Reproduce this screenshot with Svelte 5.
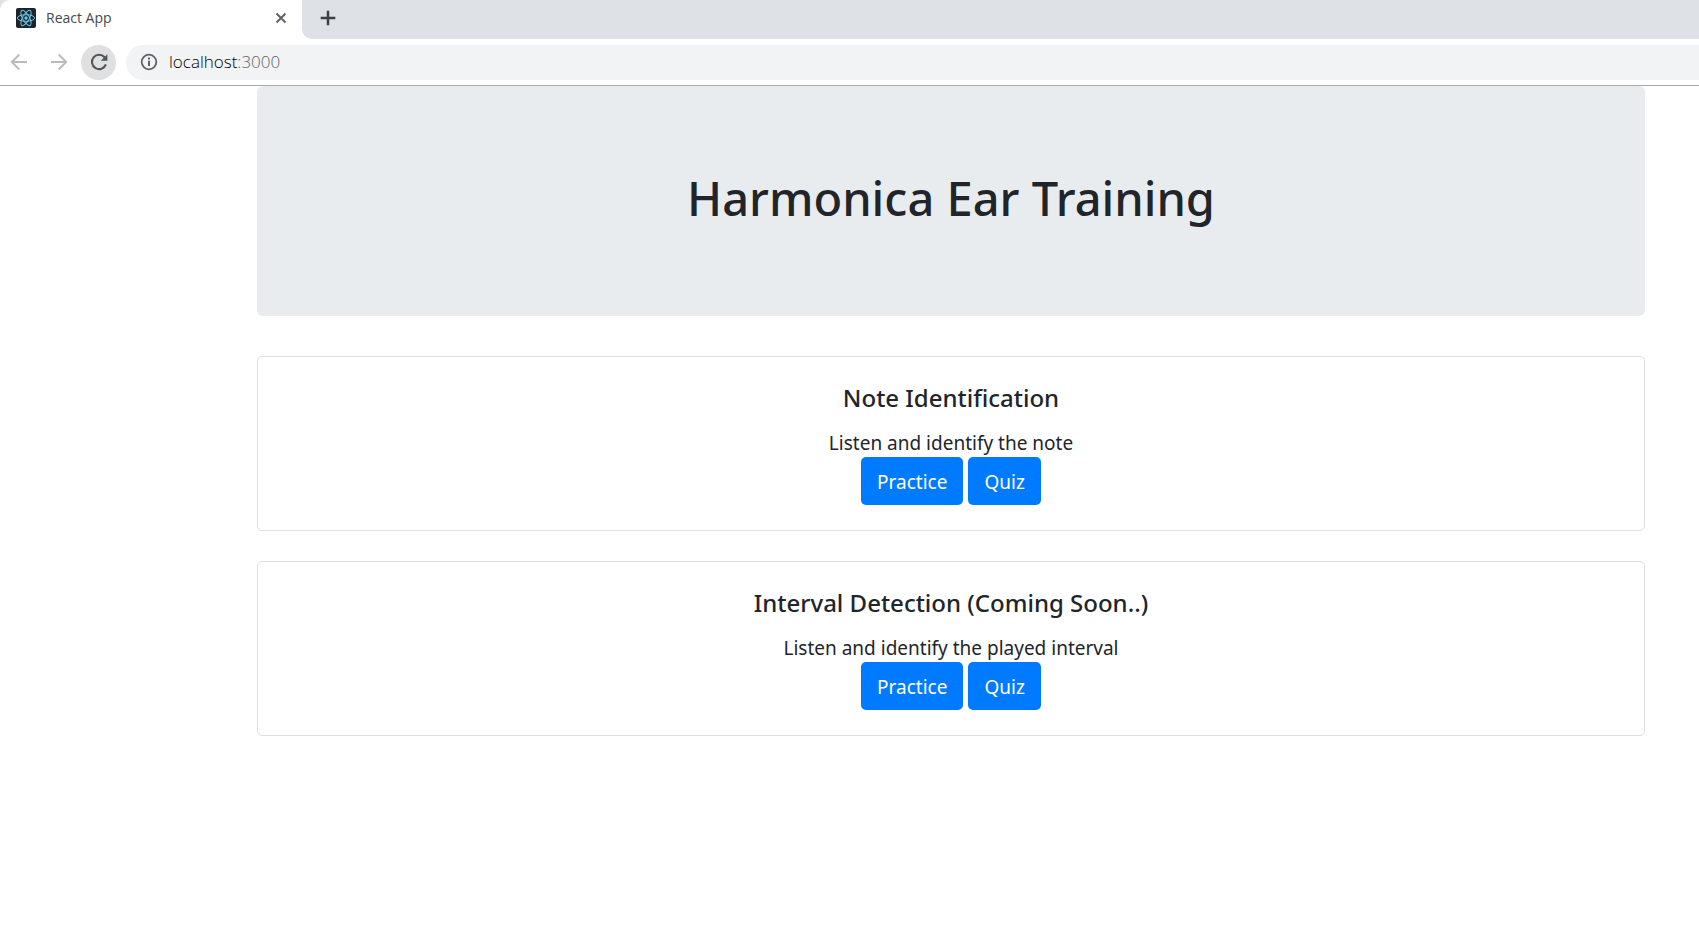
<script>
  const activities = [
    { id: 'note', title: 'Note Identification', text: 'Listen and identify the note' },
    { id: 'interval', title: 'Interval Detection (Coming Soon..)', text: 'Listen and identify the played interval' }
  ];
</script>

<div class="browser">
  <div class="tabs">
    <div class="tab">
      <svg class="favicon" viewBox="0 0 20 20" aria-hidden="true">
        <rect width="20" height="20" rx="2" fill="#20232a" />
        <g fill="none" stroke="#61c8e6" stroke-width="1">
          <ellipse cx="10" cy="10" rx="8.6" ry="3.3" />
          <ellipse cx="10" cy="10" rx="8.6" ry="3.3" transform="rotate(60 10 10)" />
          <ellipse cx="10" cy="10" rx="8.6" ry="3.3" transform="rotate(120 10 10)" />
        </g>
        <circle cx="10" cy="10" r="1.7" fill="#61c8e6" />
      </svg>
      <span class="tab-title">React App</span>
      <button class="close" aria-label="Close tab">
        <svg width="12" height="12" viewBox="0 0 12 12"><path d="M1.5 1.5l9 9M10.5 1.5l-9 9" stroke="#5f6368" stroke-width="2" /></svg>
      </button>
    </div>
    <div class="strip">
      <button class="new-tab" aria-label="New tab">
        <svg width="16" height="16" viewBox="0 0 16 16"><path d="M8 .7v14.6M.7 8h14.6" stroke="#3c4043" stroke-width="2.5" /></svg>
      </button>
    </div>
  </div>

  <div class="toolbar">
    <button class="nav" aria-label="Back">
      <svg width="18" height="18" viewBox="0 0 18 18"><path d="M17 9H2M9.3 1.5L1.8 9l7.5 7.5" fill="none" stroke="#b9bbbd" stroke-width="1.9" /></svg>
    </button>
    <button class="nav" aria-label="Forward">
      <svg width="18" height="18" viewBox="0 0 18 18"><path d="M1 9h15M8.7 1.5L16.2 9l-7.5 7.5" fill="none" stroke="#b9bbbd" stroke-width="1.9" /></svg>
    </button>
    <button class="nav reload" aria-label="Reload">
      <svg width="20" height="20" viewBox="0 0 20 20">
        <path d="M16.9 12.4A7.2 7.2 0 1 1 15.6 5.2" fill="none" stroke="#505458" stroke-width="2.1" />
        <path d="M18.4 2.2v6.6h-6.6z" fill="#505458" />
      </svg>
    </button>
    <div class="address">
      <svg width="18" height="18" viewBox="0 0 18 18" aria-hidden="true">
        <circle cx="9" cy="9" r="7.3" fill="none" stroke="#5f6368" stroke-width="1.8" />
        <path d="M9 7.8v5.3M9 4.6v1.9" stroke="#5f6368" stroke-width="2" />
      </svg>
      <span class="url">localhost<span class="port">:3000</span></span>
    </div>
  </div>
</div>

<main>
  <header class="jumbotron">
    <h1>Harmonica Ear Training</h1>
  </header>
  {#each activities as activity (activity.id)}
    <section class="card" aria-labelledby={activity.id}>
      <h2 id={activity.id}>{activity.title}</h2>
      <p>{activity.text}</p>
      <div class="actions">
        <button class="btn">Practice</button>
        <button class="btn">Quiz</button>
      </div>
    </section>
  {/each}
</main>

<style>
  :global(body) {
    margin: 0;
    background: #fff;
    color: #212529;
    font-family: "Noto Sans", "Open Sans", sans-serif;
  }
  button {
    border: 0;
    padding: 0;
    background: none;
    font: inherit;
    cursor: pointer;
  }
  svg {
    display: block;
    flex: none;
  }
  .browser {
    border-bottom: 1px solid #a8a9ab;
    font-family: "Open Sans", sans-serif;
  }
  .tabs {
    display: flex;
    height: 39px;
    background: linear-gradient(90deg, #dee1e6 10px, #fff 10px);
  }
  .tab {
    box-sizing: border-box;
    display: flex;
    align-items: center;
    width: 302px;
    padding: 0 15px 4px 16px;
    background: #fff;
    border-radius: 10px 10px 0 0;
  }
  .favicon {
    width: 20px;
    height: 20px;
  }
  .tab-title {
    flex: 1;
    margin-left: 10px;
    font-size: 14px;
    color: #45494d;
  }
  .strip {
    flex: 1;
    display: flex;
    align-items: center;
    padding: 0 0 4px 18px;
    background: #dee1e6;
    border-bottom-left-radius: 10px;
  }
  .toolbar {
    display: flex;
    align-items: center;
    height: 46px;
    padding-left: 1px;
  }
  .nav {
    display: grid;
    place-items: center;
    width: 35px;
    height: 35px;
    margin-right: 5px;
    border-radius: 50%;
  }
  .reload {
    margin-right: 10px;
    background: #e0e0e1;
  }
  .address {
    flex: 1;
    display: flex;
    align-items: center;
    gap: 11px;
    height: 35px;
    padding-left: 14px;
    background: #f1f3f4;
    border-radius: 18px 0 0 18px;
  }
  .url {
    font-size: 17px;
    font-weight: 300;
    line-height: 24px;
    color: #000;
  }
  .port {
    color: #5f6368;
  }
  main {
    margin: 0 54px 0 257px;
    text-align: center;
  }
  .jumbotron {
    margin-bottom: 40px;
    padding: 82px 40px 88px;
    background: #e9ecef;
    border-radius: 6px;
  }
  h1 {
    margin: 0;
    font-size: 47px;
    font-weight: 500;
    line-height: 60px;
  }
  .card {
    margin-bottom: 30px;
    padding: 25px;
    border: 1px solid #dfdfdf;
    border-radius: 5px;
  }
  h2 {
    margin: 0;
    padding: 1px 0 14px;
    font-size: 24px;
    font-weight: 500;
    line-height: 30px;
  }
  p {
    margin: 0;
    padding-top: 2px;
    font-size: 19px;
    line-height: 28px;
  }
  .actions {
    display: flex;
    justify-content: center;
    gap: 5px;
  }
  .btn {
    height: 48px;
    padding: 2px 16px 0;
    font-size: 19px;
    line-height: 30px;
    color: #fff;
    background: #007bff;
    border-radius: 5px;
  }
</style>
